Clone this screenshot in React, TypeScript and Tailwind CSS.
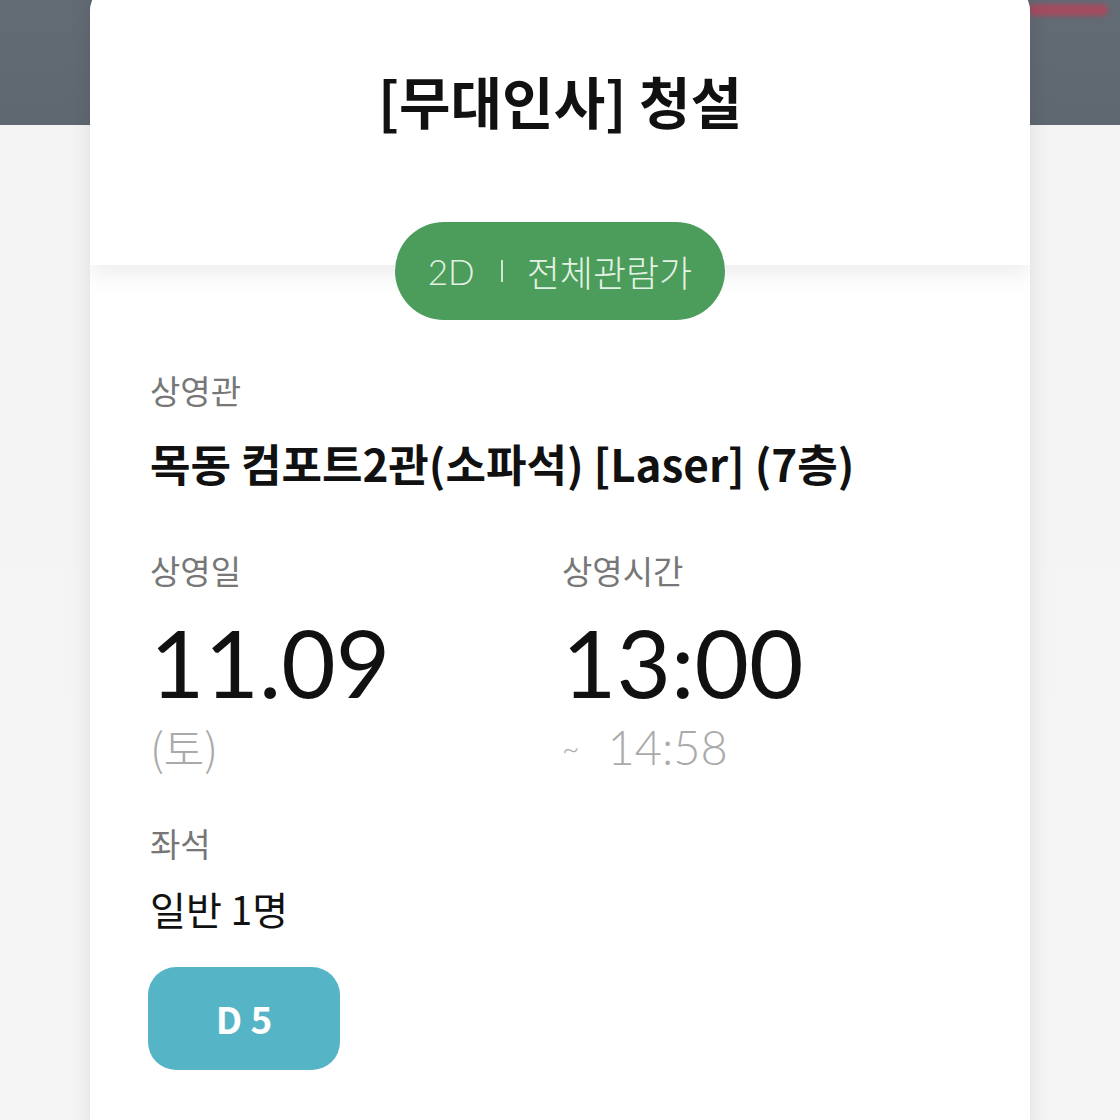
import React from "react";

const KR = "font-['Noto_Sans_CJK_KR','Noto_Sans',sans-serif]";
const LATO = "font-['Lato','Noto_Sans_CJK_KR',sans-serif]";

export default function App() {
  return (
    <div className="relative min-h-[1120px] w-[1120px] overflow-hidden bg-[linear-gradient(to_bottom,#636b74_0px,#5f6871_125px,#f4f4f5_125px,#f5f5f5_100%)]">
      <div className="absolute right-[12px] top-[4px] h-[12px] w-[80px] rounded-full bg-[#b8425a] opacity-75 blur-[2px]" />
      <div className="relative mx-[90px] mt-[-20px] w-[940px] overflow-hidden rounded-t-[32px] bg-white shadow-[0_0_22px_rgba(0,0,0,0.10)]">
        <div className="relative z-10 h-[285px] bg-white pt-[88px] shadow-[0_10px_22px_rgba(0,0,0,0.07)]">
          <h1 className={`${KR} text-center text-[56px] font-bold leading-[64px] text-[#111]`}>
            [무대인사] 청설
          </h1>
        </div>
        <div className="relative z-20 flex justify-center">
          <div className={`${KR} mt-[-43px] flex h-[98px] w-[330px] items-center justify-center rounded-full bg-[#4c9d5c] font-light text-[#e3f2e3]`}>
            <span className={`${LATO} text-[35px]`}>2D</span>
            <span className="ml-[26px] mr-[24px] h-[22px] w-[2px] bg-[#cfe6cf]" />
            <span className="text-[36px]">전체관람가</span>
          </div>
        </div>
        <div className="relative z-0 px-[60px] pb-[60px]">
          <div className={`${KR} mt-[50px] text-[33px] leading-[40px] text-[#777]`}>상영관</div>
          <div className={`${KR} mt-[25px] text-[44px] font-bold leading-[56px] text-[#111]`}>
            목동 컴포트2관(소파석) [Laser] (7층)
          </div>
          <div className="mt-[59px] flex">
            <div className="w-[412px]">
              <div className={`${KR} text-[33px] leading-[40px] text-[#777]`}>상영일</div>
              <div className={`${LATO} mt-[22px] text-[94px] leading-[100px] text-[#111]`}>11.09</div>
              <div className={`${KR} mt-[10px] text-[44px] font-light leading-[50px] text-[#aaa]`}>(토)</div>
            </div>
            <div>
              <div className={`${KR} text-[33px] leading-[40px] text-[#777]`}>상영시간</div>
              <div className={`${LATO} mt-[22px] text-[94px] leading-[100px] text-[#111]`}>13:00</div>
              <div className={`${LATO} mt-[10px] flex items-center text-[47px] font-light leading-[50px] text-[#aaa]`}>
                <span className="mr-[28px] text-[30px]">~</span>
                <span>14:58</span>
              </div>
            </div>
          </div>
          <div className={`${KR} mt-[51px] text-[33px] leading-[40px] text-[#777]`}>좌석</div>
          <div className={`${KR} mt-[20px] text-[39px] leading-[50px] text-[#111]`}>일반 1명</div>
          <div className="ml-[-2px] mt-[34px] flex h-[103px] w-[192px] items-center justify-center rounded-[28px] bg-[#56b4c7]">
            <span className={`${KR} text-[37px] font-bold text-white`}>D 5</span>
          </div>
        </div>
      </div>
    </div>
  );
}
